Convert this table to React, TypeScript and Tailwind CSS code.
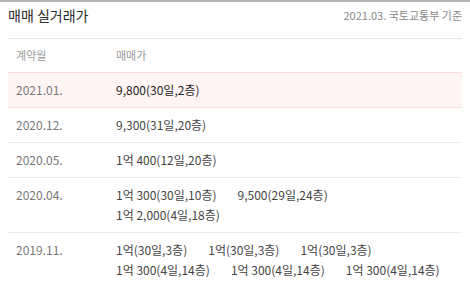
const rows = [
  { month: "2021.01.", lines: [["9,800(30일,2층)"]], active: true },
  { month: "2020.12.", lines: [["9,300(31일,20층)"]] },
  { month: "2020.05.", lines: [["1억 400(12일,20층)"]] },
  {
    month: "2020.04.",
    lines: [["1억 300(30일,10층)", "9,500(29일,24층)"], ["1억 2,000(4일,18층)"]],
  },
  {
    month: "2019.11.",
    lines: [
      ["1억(30일,3층)", "1억(30일,3층)", "1억(30일,3층)"],
      ["1억 300(4일,14층)", "1억 300(4일,14층)", "1억 300(4일,14층)"],
    ],
  },
];

export default function App() {
  return (
    <div
      className="w-[470px] h-[285px] overflow-hidden bg-white border-t-2 border-[#b4b4b4] px-2"
      style={{ fontFamily: '"Noto Sans CJK KR", "Noto Sans", sans-serif' }}
    >
      {/* 헤더 */}
      <div className="flex items-start justify-between pt-[3px] pb-[13px] border-b border-[#e6e6e6]">
        <h2 className="text-[14px] leading-5 text-[#2a2a2a]">매매 실거래가</h2>
        <span className="text-[11px] leading-5 text-[#888]">2021.03. 국토교통부 기준</span>
      </div>

      {/* 표 머리 */}
      <div className="flex items-center h-[33px] text-[11px] text-[#999]">
        <div className="w-[108px] pl-2">계약월</div>
        <div>매매가</div>
      </div>

      {/* 거래 목록 */}
      {rows.map((row) => (
        <div
          key={row.month}
          className={`flex py-[7px] text-[12px] leading-5 border-b ${
            row.active ? "bg-[#fff5f4] border-t border-[#fcdcdc]" : "border-[#ececec]"
          }`}
        >
          <div className="w-[108px] pl-2 text-[#777]">{row.month}</div>
          <div className={row.active ? "text-[#222]" : "text-[#444]"}>
            {row.lines.map((line, i) => (
              <div key={i} className="flex gap-[21px]">
                {line.map((p, j) => (
                  <span key={j}>{p}</span>
                ))}
              </div>
            ))}
          </div>
        </div>
      ))}
    </div>
  );
}
